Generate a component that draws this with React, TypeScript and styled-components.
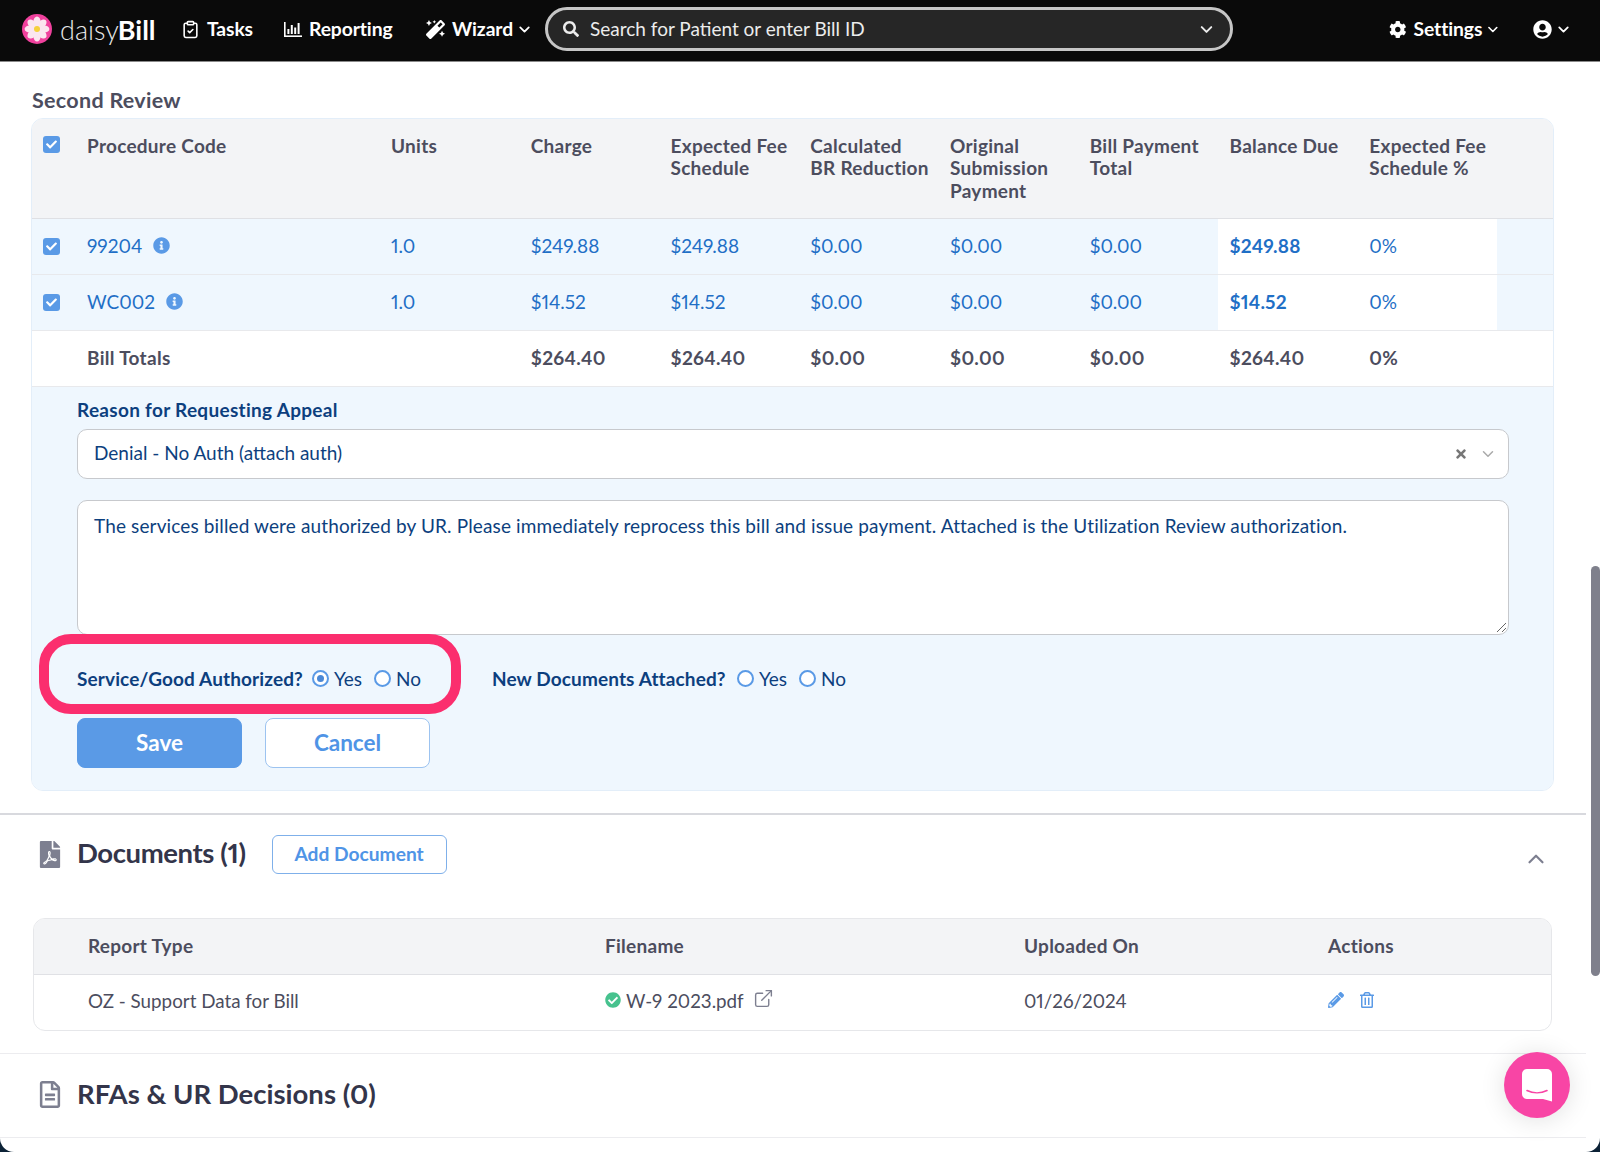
import React from "react";
import styled, { createGlobalStyle } from "styled-components";
import { FaCog, FaUserCircle, FaMagic, FaInfoCircle, FaFilePdf, FaRegFileAlt, FaCheckCircle, FaPencilAlt, FaRegTrashAlt, FaTimes, FaCheck, FaSearch } from "react-icons/fa";
import { ChevronDown, ChevronUp, ClipboardCheck, ExternalLink } from "lucide-react";

const Global = createGlobalStyle`
  html, body { margin: 0; padding: 0; background: #0c2236; }
  body { width: 1600px; height: 1152px; overflow: hidden; font-family: "Lato", "Liberation Sans", sans-serif; font-variant-numeric: proportional-nums; }
  * { box-sizing: border-box; }
`;

const Page = styled.div`
  position: relative;
  width: 1600px;
  height: 1152px;
  background: #fff;
  border-radius: 0 0 14px 14px;
  overflow: hidden;
`;

const Nav = styled.header`
  height: 62px;
  background: #0a0a0a;
  border-bottom: 1px solid #8a8a8a;
  display: flex;
  align-items: center;
  padding: 0 0 3px 22px;
  color: #fff;
`;
const Logo = styled.div`
  display: flex;
  align-items: center;
  gap: 8px;
  width: 159px;
  flex: none;
  font-size: 27px;
`;
const LogoThin = styled.span`
  font-weight: 300;
  color: #e8e8e8;
`;
const LogoBold = styled.span`
  font-weight: 700;
  margin-left: -1px;
`;
const NavItem = styled.div<{ $w: number }>`
  display: flex;
  align-items: center;
  gap: 7px;
  width: ${(p) => p.$w}px;
  flex: none;
  font-size: 19.3px;
  font-weight: 700;
  letter-spacing: -0.1px;
`;
const NavLabel = styled.span`
  padding-bottom: 2px;
`;
const NavChev = styled(ChevronDown)`
  margin-left: -4px;
`;
const Search = styled.div`
  width: 688px;
  height: 44px;
  flex: none;
  border: 3px solid #c6c6c6;
  border-radius: 22px;
  background: #262626;
  display: flex;
  align-items: center;
  padding: 0 14px 0 15px;
  gap: 11px;
  font-size: 19px;
  color: #ececec;
`;
const SearchText = styled.span`
  flex: 1;
  padding-bottom: 2px;
`;
const NavRight = styled.div`
  margin-left: 156px;
  display: flex;
  align-items: center;
  gap: 32px;
`;

const Main = styled.main`
  width: 1586px;
  padding-top: 26px;
`;
const SectionTitle = styled.h2`
  margin: 0 0 6px 32px;
  font-size: 21.5px;
  line-height: 24px;
  font-weight: 700;
  letter-spacing: 0.3px;
  color: #4c4d5e;
`;
const Card = styled.section`
  margin-left: 31px;
  width: 1523px;
  border: 1px solid #e3eef9;
  border-radius: 12px;
  overflow: hidden;
  background: #fff;
`;
const COLS = "43px 304px repeat(8, 139.75px) 1fr";
const HeadRow = styled.div`
  display: grid;
  grid-template-columns: ${COLS};
  height: 100px;
  background: #f3f4f6;
  border-bottom: 1px solid #dfe0e4;
  color: #4c4d5e;
  font-size: 19px;
  letter-spacing: 0.27px;
  line-height: 22.4px;
  font-weight: 700;
`;
const HeadCell = styled.div`
  padding: 16px 0 0 12px;
  white-space: pre-line;
`;
const CheckCell = styled.div<{ $top?: boolean }>`
  display: flex;
  justify-content: flex-end;
  align-items: ${(p) => (p.$top ? "flex-start" : "center")};
  padding: ${(p) => (p.$top ? "17px" : "0")} 15px 0 0;
`;
const Check = styled.span`
  width: 17px;
  height: 17px;
  border-radius: 3px;
  background: #5a9ae6;
  color: #fff;
  display: inline-flex;
  align-items: center;
  justify-content: center;
  font-size: 11px;
`;
const Row = styled.div<{ $tint?: boolean }>`
  display: grid;
  grid-template-columns: ${COLS};
  height: 56px;
  background: ${(p) => (p.$tint ? "#eff7fe" : "#fff")};
  border-bottom: 1.5px solid #e8e9ec;
  color: ${(p) => (p.$tint ? "#1f6fc6" : "#4c4d5e")};
  font-size: 19px;
  font-weight: ${(p) => (p.$tint ? 400 : 700)};
  letter-spacing: ${(p) => (p.$tint ? "0" : "0.3px")};
`;
const Cell = styled.div<{ $hl?: boolean; $bold?: boolean }>`
  display: flex;
  align-items: center;
  gap: 11px;
  padding: 0 0 2px 12px;
  background: ${(p) => (p.$hl ? "#fff" : "transparent")};
  font-weight: ${(p) => (p.$bold ? 700 : "inherit")};
  letter-spacing: ${(p) => (p.$bold ? "0.2px" : "inherit")};
`;
const InfoIcon = styled(FaInfoCircle)`
  color: #5a9ae6;
  font-size: 17px;
`;
const Panel = styled.div`
  background: #eff7fe;
  padding: 12px 45px 22px;
  color: #0d3f7e;
`;
const FieldLabel = styled.label`
  display: block;
  font-size: 19px;
  letter-spacing: 0.3px;
  line-height: 22px;
  font-weight: 700;
  margin-bottom: 8px;
`;
const Select = styled.div`
  height: 50px;
  width: 1432px;
  background: #fff;
  border: 1px solid #c7c9cd;
  border-radius: 10px;
  display: flex;
  align-items: center;
  padding: 0 11px 4px 16px;
  font-size: 19px;
`;
const SelectValue = styled.span`
  flex: 1;
`;
const ClearIcon = styled(FaTimes)`
  color: #777;
  font-size: 14px;
  margin: 4px 11px 0 0;
`;
const SelectChev = styled(ChevronDown)`
  margin-top: 4px;
`;
const Textarea = styled.div`
  position: relative;
  margin-top: 21px;
  height: 135px;
  width: 1432px;
  background: #fff;
  border: 1px solid #c7c9cd;
  border-radius: 10px;
  padding: 14px 16px;
  font-size: 19px;
  letter-spacing: 0.13px;
  line-height: 22px;
`;
const Resize = styled.svg`
  position: absolute;
  right: 1px;
  bottom: 1px;
`;
const RadioRow = styled.div`
  margin-top: 32px;
  display: flex;
  align-items: center;
  height: 22px;
  font-size: 19px;
`;
const RadioLabel = styled.span<{ $w: number }>`
  font-weight: 700;
  letter-spacing: 0.12px;
  width: ${(p) => p.$w}px;
  flex: none;
`;
const RadioOpt = styled.span<{ $w: number }>`
  display: inline-flex;
  align-items: center;
  gap: 5px;
  width: ${(p) => p.$w}px;
  flex: none;
`;
const RadioDot = styled.span<{ $on?: boolean }>`
  width: 17px;
  height: 17px;
  border-radius: 50%;
  border: 2.5px solid #5a9ae6;
  background: #fff;
  display: inline-flex;
  align-items: center;
  justify-content: center;
  &::after {
    content: "";
    width: 7px;
    height: 7px;
    border-radius: 50%;
    background: ${(p) => (p.$on ? "#4a88d6" : "transparent")};
  }
`;
const Highlight = styled.div`
  position: absolute;
  left: 39px;
  top: 634px;
  width: 422px;
  height: 80px;
  border: 10px solid #fb2e6e;
  border-radius: 32px;
  pointer-events: none;
`;
const Buttons = styled.div`
  margin-top: 29px;
  display: flex;
  gap: 23px;
`;
const Btn = styled.button<{ $primary?: boolean }>`
  width: 165px;
  height: 50px;
  border-radius: 8px;
  border: 1px solid ${(p) => (p.$primary ? "#5a9ae6" : "#9cc3f0")};
  background: ${(p) => (p.$primary ? "#5a9ae6" : "#fff")};
  color: ${(p) => (p.$primary ? "#fff" : "#4f94e6")};
  font: 700 22.5px "Lato", sans-serif;
  padding: 0 0 2px;
`;

const Block = styled.section<{ $heavy?: boolean }>`
  border-top: ${(p) => (p.$heavy ? "2px solid #d8d9de" : "1px solid #ececef")};
  margin-top: ${(p) => (p.$heavy ? "22px" : "0")};
`;
const BlockHead = styled.div<{ $top: number; $bottom: number }>`
  display: flex;
  align-items: center;
  padding: ${(p) => p.$top}px 0 ${(p) => p.$bottom}px 39px;
  height: 38px;
  box-sizing: content-box;
`;
const PdfIcon = styled(FaFilePdf)`
  color: #7d7f90;
  font-size: 27px;
  width: 22px;
  margin-right: 16px;
`;
const DocIcon = styled(FaRegFileAlt)`
  color: #7d7f90;
  font-size: 27px;
  width: 22px;
  margin-right: 16px;
`;
const BlockTitle = styled.h3<{ $tight?: boolean }>`
  margin: 0 0 ${(p) => (p.$tight ? "4px" : "2px")};
  font-size: 27.5px;
  font-weight: 700;
  letter-spacing: ${(p) => (p.$tight ? "-0.4px" : "0")};
  color: #33354a;
`;
const AddBtn = styled.button`
  margin-left: 26px;
  width: 175px;
  height: 39px;
  border-radius: 6px;
  border: 1px solid #7fb0ea;
  background: #fff;
  color: #4f94e6;
  font: 700 19.2px "Lato", sans-serif;
  padding: 0 0 1px;
`;
const Collapse = styled(ChevronUp)`
  margin: 9px 37px 0 auto;
  color: #7d7f90;
`;
const DocTable = styled.div`
  margin: 25px 0 22px 33px;
  width: 1519px;
  border: 1px solid #e6e7ea;
  border-radius: 12px;
  overflow: hidden;
`;
const DOCCOLS = "517px 419px 304px 1fr";
const DocHead = styled.div`
  display: grid;
  grid-template-columns: ${DOCCOLS};
  height: 56px;
  padding-bottom: 2px;
  background: #f3f4f6;
  border-bottom: 1px solid #e0e1e5;
  align-items: center;
  font-size: 19px;
  letter-spacing: 0.27px;
  font-weight: 700;
  color: #4c4d5e;
`;
const DocRow = styled.div`
  display: grid;
  grid-template-columns: ${DOCCOLS};
  height: 55px;
  padding-bottom: 5px;
  align-items: center;
  font-size: 18.8px;
  color: #4c4d5e;
`;
const DocCell = styled.div`
  padding-left: 54px;
  display: flex;
  align-items: center;
  gap: 5px;
`;
const OkIcon = styled(FaCheckCircle)`
  color: #47c28e;
  font-size: 16px;
`;
const LinkIcon = styled(ExternalLink)`
  color: #7d7f90;
  margin-left: 4px;
  margin-top: -4px;
`;
const ActionIcons = styled.div`
  display: flex;
  align-items: center;
  gap: 15px;
  padding-left: 54px;
  color: #5a9ae6;
  font-size: 16px;
`;
const Scrollbar = styled.div`
  position: absolute;
  right: 0;
  top: 566px;
  width: 9px;
  height: 410px;
  background: #7f808c;
  border-radius: 5px;
`;
const Chat = styled.div`
  position: absolute;
  left: 1504px;
  top: 1052px;
  width: 66px;
  height: 66px;
  border-radius: 50%;
  background: #f845a5;
  box-shadow: 0 2px 26px rgba(0, 0, 0, 0.12);
  display: flex;
  align-items: center;
  justify-content: center;
`;

const Flower = () => (
  <svg width="30" height="30" viewBox="0 0 30 30">
    <circle cx="15" cy="15" r="15" fill="#f0419d" />
    {[0, 45, 90, 135, 180, 225, 270, 315].map((a) => (
      <ellipse key={a} cx="15" cy="7.8" rx="3.6" ry="5.2" fill="#fbe6ef" transform={`rotate(${a} 15 15)`} />
    ))}
    <circle cx="15" cy="15" r="3" fill="#f5d13b" />
  </svg>
);
const BarsIcon = () => (
  <svg width="18" height="16" viewBox="0 0 18 16" fill="#fff">
    <rect x="0" y="1" width="1.6" height="15" />
    <rect x="0" y="14.4" width="18" height="1.6" />
    <rect x="3.4" y="8" width="2" height="5" />
    <rect x="6.8" y="4" width="2" height="9" />
    <rect x="10.2" y="6.5" width="2" height="6.5" />
    <rect x="13.6" y="2" width="2" height="11" />
  </svg>
);
const ChatIcon = () => (
  <svg width="30" height="33" viewBox="0 0 30 33">
    <path d="M5 0h20a5 5 0 0 1 5 5v27.5L21 30H5a5 5 0 0 1-5-5V5a5 5 0 0 1 5-5z" fill="#fff" />
    <path d="M5 21.5c6 3 14 3 20 0" stroke="#f845a5" strokeWidth="1.6" fill="none" strokeLinecap="round" />
  </svg>
);

const Chev = () => <NavChev size={17} strokeWidth={2.5} />;
const Box = () => (
  <Check>
    <FaCheck />
  </Check>
);

const heads = ["Procedure Code", "Units", "Charge", "Expected Fee\nSchedule", "Calculated\nBR Reduction", "Original\nSubmission\nPayment", "Bill Payment\nTotal", "Balance Due", "Expected Fee\nSchedule %"];

const rows = [
  { code: "99204", charge: "$249.88" },
  { code: "WC002", charge: "$14.52" },
];

export default function App() {
  return (
    <Page>
      <Global />
      <Nav>
        <Logo>
          <Flower />
          <span>
            <LogoThin>daisy</LogoThin>
            <LogoBold>Bill</LogoBold>
          </span>
        </Logo>
        <NavItem $w={103}>
          <ClipboardCheck size={19} strokeWidth={2} />
          <NavLabel>Tasks</NavLabel>
        </NavItem>
        <NavItem $w={142}>
          <BarsIcon />
          <NavLabel>Reporting</NavLabel>
        </NavItem>
        <NavItem $w={119}>
          <FaMagic size={19} />
          <NavLabel>Wizard</NavLabel>
          <Chev />
        </NavItem>
        <Search>
          <FaSearch size={16} />
          <SearchText>Search for Patient or enter Bill ID</SearchText>
          <ChevronDown size={19} strokeWidth={2.5} />
        </Search>
        <NavRight>
          <NavItem $w={112}>
            <FaCog size={19} />
            <NavLabel>Settings</NavLabel>
            <Chev />
          </NavItem>
          <NavItem $w={40}>
            <FaUserCircle size={19} />
            <Chev />
          </NavItem>
        </NavRight>
      </Nav>
      <Main>
        <SectionTitle>Second Review</SectionTitle>
        <Card>
          <HeadRow>
            <CheckCell $top>
              <Box />
            </CheckCell>
            {heads.map((h) => (
              <HeadCell key={h}>{h}</HeadCell>
            ))}
          </HeadRow>
          {rows.map((r) => (
            <Row $tint key={r.code}>
              <CheckCell>
                <Box />
              </CheckCell>
              <Cell>
                {r.code} <InfoIcon />
              </Cell>
              <Cell>1.0</Cell>
              <Cell>{r.charge}</Cell>
              <Cell>{r.charge}</Cell>
              <Cell>$0.00</Cell>
              <Cell>$0.00</Cell>
              <Cell>$0.00</Cell>
              <Cell $hl $bold>
                {r.charge}
              </Cell>
              <Cell $hl>0%</Cell>
              <Cell />
            </Row>
          ))}
          <Row>
            <Cell />
            <Cell>Bill Totals</Cell>
            <Cell />
            <Cell>$264.40</Cell>
            <Cell>$264.40</Cell>
            <Cell>$0.00</Cell>
            <Cell>$0.00</Cell>
            <Cell>$0.00</Cell>
            <Cell>$264.40</Cell>
            <Cell>0%</Cell>
            <Cell />
          </Row>
          <Panel>
            <FieldLabel>Reason for Requesting Appeal</FieldLabel>
            <Select>
              <SelectValue>Denial - No Auth (attach auth)</SelectValue>
              <ClearIcon />
              <SelectChev size={18} color="#aaa" />
            </Select>
            <Textarea>
              The services billed were authorized by UR. Please immediately reprocess this bill and issue payment. Attached is the Utilization Review authorization.
              <Resize width="12" height="12" viewBox="0 0 12 12">
                <path d="M11 2L2 11M11 7L7 11" stroke="#666" strokeWidth="1" />
              </Resize>
            </Textarea>
            <RadioRow>
              <RadioLabel $w={235}>Service/Good Authorized?</RadioLabel>
              <RadioOpt $w={62}>
                <RadioDot $on />
                Yes
              </RadioOpt>
              <RadioOpt $w={118}>
                <RadioDot />
                No
              </RadioOpt>
              <RadioLabel $w={245}>New Documents Attached?</RadioLabel>
              <RadioOpt $w={62}>
                <RadioDot />
                Yes
              </RadioOpt>
              <RadioOpt $w={60}>
                <RadioDot />
                No
              </RadioOpt>
            </RadioRow>
            <Buttons>
              <Btn $primary>Save</Btn>
              <Btn>Cancel</Btn>
            </Buttons>
          </Panel>
        </Card>
        <Block $heavy>
          <BlockHead $top={20} $bottom={20}>
            <PdfIcon />
            <BlockTitle $tight>Documents (1)</BlockTitle>
            <AddBtn>Add Document</AddBtn>
            <Collapse size={26} />
          </BlockHead>
          <DocTable>
            <DocHead>
              <DocCell>Report Type</DocCell>
              <DocCell>Filename</DocCell>
              <DocCell>Uploaded On</DocCell>
              <DocCell>Actions</DocCell>
            </DocHead>
            <DocRow>
              <DocCell>OZ - Support Data for Bill</DocCell>
              <DocCell>
                <OkIcon />
                W-9 2023.pdf
                <LinkIcon size={21} strokeWidth={1.6} />
              </DocCell>
              <DocCell>01/26/2024</DocCell>
              <ActionIcons>
                <FaPencilAlt />
                <FaRegTrashAlt />
              </ActionIcons>
            </DocRow>
          </DocTable>
        </Block>
        <Block>
          <BlockHead $top={21} $bottom={24}>
            <DocIcon />
            <BlockTitle>RFAs &amp; UR Decisions (0)</BlockTitle>
          </BlockHead>
        </Block>
        <Block />
      </Main>
      <Highlight />
      <Scrollbar />
      <Chat>
        <ChatIcon />
      </Chat>
    </Page>
  );
}
